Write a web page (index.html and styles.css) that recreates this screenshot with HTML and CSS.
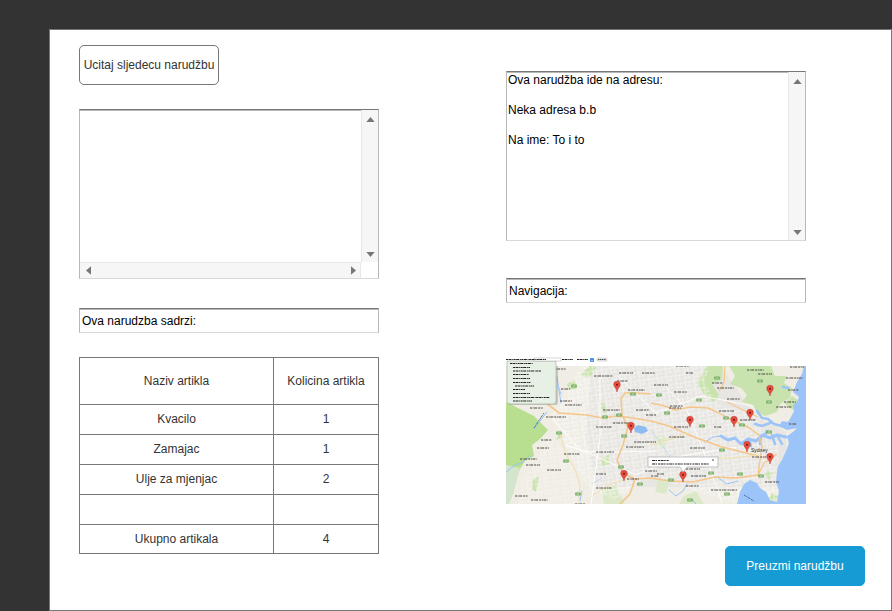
FILE: index.html
```html
<!DOCTYPE html>
<html lang="bs">
<head>
<meta charset="utf-8">
<meta name="viewport" content="width=device-width, initial-scale=1">
<title>Narudžba</title>
<link rel="stylesheet" href="styles.css">
</head>
<body>
<main class="panel">
  <section class="column">
    <button class="button" type="button">Ucitaj sljedecu narudžbu</button>
    <div class="scrollbox scrollbox-both">
      <textarea class="area" aria-label="Narudžba"></textarea>
      <div class="bar bar-vertical" aria-hidden="true">
        <svg class="arrow" viewBox="0 0 10 6"><path d="M5 0L10 6H0Z"/></svg>
        <svg class="arrow" viewBox="0 0 10 6"><path d="M0 0H10L5 6Z"/></svg>
      </div>
      <div class="bar bar-horizontal" aria-hidden="true">
        <svg class="arrow-side" viewBox="0 0 6 10"><path d="M0 5L6 0V10Z"/></svg>
        <svg class="arrow-side" viewBox="0 0 6 10"><path d="M0 0L6 5L0 10Z"/></svg>
      </div>
    </div>
    <input class="field field-contents" type="text" aria-label="Sadržaj narudžbe" value="Ova narudzba sadrzi:">
    <table class="items">
      <thead>
        <tr><th class="name" scope="col">Naziv artikla</th><th scope="col">Kolicina artikla</th></tr>
      </thead>
      <tbody>
        <tr><td>Kvacilo</td><td>1</td></tr>
        <tr><td>Zamajac</td><td>1</td></tr>
        <tr><td>Ulje za mjenjac</td><td>2</td></tr>
        <tr><td></td><td></td></tr>
        <tr class="total"><td>Ukupno artikala</td><td>4</td></tr>
      </tbody>
    </table>
  </section>
  <section class="column column-delivery">
    <div class="scrollbox">
      <textarea class="area" aria-label="Adresa">Ova narudžba ide na adresu:

Neka adresa b.b

Na ime: To i to</textarea>
      <div class="bar bar-vertical" aria-hidden="true">
        <svg class="arrow" viewBox="0 0 10 6"><path d="M5 0L10 6H0Z"/></svg>
        <svg class="arrow" viewBox="0 0 10 6"><path d="M0 0H10L5 6Z"/></svg>
      </div>
    </div>
    <input class="field field-navigation" type="text" aria-label="Navigacija" value="Navigacija:">
    <svg class="map" viewBox="0 0 300 147" role="img" aria-label="Mapa">
      <defs>
        <clipPath id="land"><rect y="9" width="300" height="138"/></clipPath>
        <pattern id="streets" width="9" height="8" patternUnits="userSpaceOnUse" patternTransform="rotate(-8)">
          <path d="M0 2H9M3 0V8M3 6H9M7 2V6" fill="none" stroke="#fff" stroke-width=".5"/>
        </pattern>
        <g id="pin">
          <path d="M0 1C-.4-3-3.300-4-3.300-6.500A3.300 3.300 0 0 1 3.300-6.500C3.300-4 .4-3 0 1Z" fill="#ea4c3d" stroke="#b23a30" stroke-width=".5"/>
          <circle cy="-6.300" r="1" fill="#6b1a14"/>
        </g>
        <g id="shield"><rect x="-2.800" y="-1.500" width="5.600" height="3" rx=".6" fill="#70a95c"/><path d="M-1.500 0H1.500" stroke="#e6f2df" stroke-width=".8"/></g>
      </defs>
      <g clip-path="url(#land)">
        <rect y="9" width="300" height="138" fill="#f0ede5"/>
        <path d="M85 9H215L250 60L280 75V130H90L80 80Z" fill="#e8e6e2"/>
        <g fill="#c9e3ae">
          <path d="M0 45L10 50L28 59L42 73L34 82L26 88L28 99L19 104L14 112L9 124L7 137L0 147Z" fill="#b7df8f"/>
          <path d="M0 108L14 111L8 134L3 147H0Z" fill="#d4e5cd"/>
          <path d="M75 17L84 9H91L85 19L79 20ZM61 27L69 23L71 32L63 33ZM94 46L97 44L101 55L97 56Z"/>
          <path d="M200 9L196 18L191 26L198 37L208 46L213 38L206 27L216 23L217 9Z"/>
          <path d="M223 9L229 19L224 27L235 31L241 38L236 45L247 48L251 55L259 59L271 55L274 47L284 41L286 31L278 26L281 19L269 19L265 9Z"/>
          <path d="M286 39L296 46L287 53L279 47ZM94 102L103 98L104 107L97 109ZM27 123L33 119L30 135L26 132ZM50 83L54 75L57 80ZM261 114L267 116L263 123L259 119ZM266 136L272 139L270 144L263 142Z"/>
          <path d="M153 120L163 125L160 137L149 135ZM178 139L190 134L198 147H173ZM96 132L110 128L119 147H98ZM151 77L163 81L157 91L150 88Z" fill="#dce9c8"/>
        </g>
        <path d="M75 9H204L198 25L212 47L248 57L260 76L273 84L271 145H228L180 131L142 119L110 142L83 133L61 91L45 60Z" fill="url(#streets)"/>
        <path d="M38 78L55 88L65 106L76 127L70 147H12L16 121L33 102Z" fill="url(#streets)" opacity=".6"/>
        <path d="M300 9H298L296 17L291 25L287 35L293 40L291 45L287 48L288 54L285 60L282 65L276 64L273 69L281 73L291 71L287 75L281 79L283 86L280 94L276 103L272 109L271 115L270 125L273 134L271 145L264 143L260 135L254 131L251 126L244 123L238 127L234 135L231 147H300Z" fill="#9cc4f8"/>
        <g fill="none" stroke="#9cc4f8" stroke-linecap="round" stroke-linejoin="round">
          <path d="M280 80L271 78L264 81L257 78L250 84L242 82L235 87L229 81L222 83L215 79" stroke-width="3"/>
          <path d="M279 70L268 67L262 62L256 61L251 54M264 66L256 69L249 67M266 78L269 87M255 79L254 87M243 82L245 89M272 80L276 87M258 79L261 74M282 31L277 30" stroke-width="2.500"/>
          <path d="M215 79L207 80L199 85M232 124L221 127L211 120M181 127L177 134L170 139L163 133M186 142L190 147M51 20L55 46M55 37L52 29M76 134L74 144M0 115L9 108L17 105L24 98M28 72L41 55" stroke-width="1"/>
          <path d="M145 73L161 95L166 104M86 127L96 121" stroke-width=".5"/>
        </g>
        <path d="M128 71L132 68L140 70L142 74L136 77L129 75Z" fill="#8fbcf0"/>
        <g fill="none" stroke="#fff" stroke-width=".9">
          <path d="M45 60L75 94L111 95L150 94M59 88L81 95L130 118L176 99L230 90M94 19L94 80L85 147M157 27L180 51L200 101L216 146M112 19L150 56L196 39L247 49"/>
        </g>
        <g fill="none" stroke="#f4c68b" stroke-linejoin="round">
          <path d="M39 45L53 56L81 58L96 61L111 59L127 61L145 64L163 69L188 80L216 90L236 95L252 99" stroke-width="1.600"/>
          <path d="M145 46L159 49L169 53L184 50L202 51L213 56L230 65L242 70L253 78L256 89L252 118" stroke-width="1.400"/>
          <path d="M145 37L132 36L119 36L115 42L116 58L122 70L117 88L111 103L117 116L129 122L124 137L114 147" stroke-width="1.600"/>
          <path d="M219 9L218 26L213 34M221 45L237 53L252 60M129 122L144 121L164 124L187 125L209 120L230 121L252 118L258 106L271 97" stroke-width="1.300"/>
          <path d="M53 74L60 98L68 110L74 127L73 143M87 138L107 126L124 121M144 88L162 83L181 76M144 110L175 101L224 101L254 98" stroke="#f3dfad"/>
        </g>
        <g fill="none" stroke="#4b4944" stroke-width="1" stroke-dasharray="2 .7 1 .5 3 1">
          <path d="M47 12H60M88 19H107M113 16H127M136 16H149M111 24H122M55 32H64M122 33H139M54 44H66M59 48H76M24 51H37M97 53H114M130 53H143M40 60H60M90 70H106M107 66H125M140 58H150M170 9H183M180 16H187M241 13H258M252 17H266M148 28H162M168 35H181M206 26H217M211 31H228M221 42H234M164 49H177M163 51H175M213 54H228M234 63H250M284 10H298M280 21H297M282 33H293M278 45H290M270 50H286M283 67H290M168 70H182M208 70H216"/>
          <path d="M35 83H46M31 91H43M58 97H74M14 102H31M20 108H34M41 113H55M9 139H22M25 143H42M69 147H79M90 95H108M90 117H100M90 131H106M121 122H133M120 90H138M128 85H150M139 114H151M163 80H179M184 91H199M145 119H153M151 117H158M185 119H200M180 112H194M180 129H193M205 133H231M259 125H273M246 100H260"/>
          <path d="M28 71L38 56M238 138L248 144" stroke="#466d9d"/>
        </g>
        <use href="#shield" x="53" y="76"/><use href="#shield" x="60" y="104"/><use href="#shield" x="72" y="137"/><use href="#shield" x="68" y="29"/>
        <use href="#shield" x="127" y="37"/><use href="#shield" x="99" y="60"/><use href="#shield" x="113" y="58"/><use href="#shield" x="118" y="79"/>
        <use href="#shield" x="115" y="110"/><use href="#shield" x="134" y="127"/><use href="#shield" x="153" y="38"/><use href="#shield" x="161" y="56"/>
        <use href="#shield" x="193" y="43"/><use href="#shield" x="211" y="21"/><use href="#shield" x="220" y="61"/><use href="#shield" x="196" y="69"/>
        <use href="#shield" x="236" y="68"/><use href="#shield" x="254" y="24"/><use href="#shield" x="263" y="45"/><use href="#shield" x="216" y="93"/>
        <use href="#shield" x="205" y="116"/><use href="#shield" x="234" y="117"/><use href="#shield" x="221" y="137"/><use href="#shield" x="184" y="143"/>
        <use href="#shield" x="165" y="123"/><use href="#shield" x="263" y="75"/><use href="#shield" x="255" y="119"/>
        <text class="city" x="245" y="95">Sydney</text>
        <use href="#pin" x="111" y="34"/><use href="#pin" x="125" y="75"/><use href="#pin" x="184" y="69"/><use href="#pin" x="228" y="69"/>
        <use href="#pin" x="244" y="62"/><use href="#pin" x="264" y="38"/><use href="#pin" x="241" y="94"/><use href="#pin" x="264" y="106"/>
        <use href="#pin" x="177" y="124"/><use href="#pin" x="118" y="123"/>
        <path d="M142 100H212V110H181L177 115L174 110H142Z" fill="#fff" stroke="#aaa" stroke-width=".7"/>
        <path d="M146 103.500H163M146 107H203" stroke="#222" stroke-width="1.200" stroke-dasharray="3 .5 1.500 1 2 .6"/>
        <path d="M206 102L208 104M208 102L206 104" stroke="#666" stroke-width=".6"/>
      </g>
      <path d="M2 9V46Q2 48 4 48H50Q52 48 52 46V9" fill="#6c786b" opacity=".3"/>
      <path d="M1 4H50V44Q50 47 47 47H4Q1 47 1 44Z" fill="#e7f0e4" stroke="#a4ada2" stroke-width=".6"/>
      <path d="M28 1H55V4H28Z" fill="#fff" stroke="#999" stroke-width=".4"/>
      <g stroke="#222" stroke-width="1.200" stroke-dasharray="2 .5 3 .7 1 .5">
        <path d="M0 2.500H40M56 2.500H67M71 2.500H82"/>
        <path d="M4 6.500H27M7 10.500H24M7 14H35M7 17.500H23M7 21.500H24M7 25.500H25M9 29H28M7 32.500H19M7 36.500H24M7 40.500H44M7 44H26" stroke-width="1"/>
      </g>
      <rect x="84" y="1" width="4" height="4" rx="1" fill="#438ff0"/>
      <path d="M85 3L86 4L87 3" fill="none" stroke="#fff" stroke-width=".5"/>
      <rect x="91" y="1" width="10" height="3" rx="1" fill="#eee" stroke="#aaa" stroke-width=".4"/>
      <path d="M92 2.500H100" stroke="#555" stroke-dasharray="1.500 .5"/>
    </svg>
    <button class="button button-primary" type="button">Preuzmi narudžbu</button>
  </section>
</main>
</body>
</html>
```
FILE: styles.css
```css
* {
  box-sizing: border-box;
}

body {
  margin: 0;
  background: #333;
  color: #333;
  font: 12px/15px "Liberation Sans", Arial, sans-serif;
}

button,
input,
textarea {
  font: inherit;
}

.panel {
  display: grid;
  grid-template-columns: 300px 1fr;
  column-gap: 127px;
  min-height: calc(100vh - 29px);
  margin: 29px 0 0 49px;
  padding: 15px 26px 24px 29px;
  border: 1px solid #777;
  background: #fff;
}

.column {
  display: flex;
  flex-direction: column;
  align-items: flex-start;
}

.column-delivery {
  padding-top: 26px;
}

.button {
  width: 140px;
  height: 40px;
  padding: 0;
  border: 1px solid #777;
  border-radius: 5px;
  background: #fff;
  color: #333;
  white-space: nowrap;
}

.button-primary {
  align-self: flex-end;
  margin-top: 42px;
  border-color: #169bd5;
  background: #169bd5;
  color: #fff;
}

.scrollbox,
.field {
  width: 300px;
  border: 1px solid #b8b8b8;
  border-top-color: #777;
  border-bottom-color: #d8d8d8;
  background: #fff;
  box-shadow: inset 0 1px #b8b8b8;
}

.scrollbox {
  display: grid;
  grid-template-columns: 1fr 17px;
  height: 170px;
}

.scrollbox-both {
  grid-template-rows: 1fr 16px;
  margin-top: 24px;
}

.area {
  min-width: 0;
  padding: 1px;
  border: 0;
  outline: 0;
  overflow: hidden;
  background: transparent;
  color: #000;
  resize: none;
}

.bar {
  display: flex;
  align-items: center;
  justify-content: space-between;
  background: #f6f6f6;
}

.bar-vertical {
  flex-direction: column;
  padding: 7px 0 5px;
  border-left: 1px solid #e8e8e8;
}

.bar-horizontal {
  padding: 0 4px 0 6px;
  border-top: 1px solid #e8e8e8;
  border-right: 1px solid #e8e8e8;
}

.arrow,
.arrow-side {
  fill: #777;
}

.arrow {
  width: 9px;
  height: 5px;
}

.arrow-side {
  width: 5px;
  height: 9px;
}

.field {
  height: 25px;
  padding: 0 2px;
  color: #000;
}

.field-contents {
  margin-top: 29px;
}

.field-navigation {
  margin-top: 37px;
}

.items {
  width: 300px;
  margin-top: 24px;
  border: solid #777;
  border-width: 1px 0 0 1px;
  border-spacing: 0;
  table-layout: fixed;
  text-align: center;
}

.items th,
.items td {
  height: 30px;
  padding: 0;
  border: solid #777;
  border-width: 0 1px 1px 0;
  font-weight: normal;
}

.items th {
  height: 47px;
}

.items .total td {
  height: 29px;
}

.items .name {
  width: 194px;
}

.map {
  width: 300px;
  height: 147px;
  margin-top: 54px;
}

.city {
  fill: #222;
  font-size: 5px;
}
```
